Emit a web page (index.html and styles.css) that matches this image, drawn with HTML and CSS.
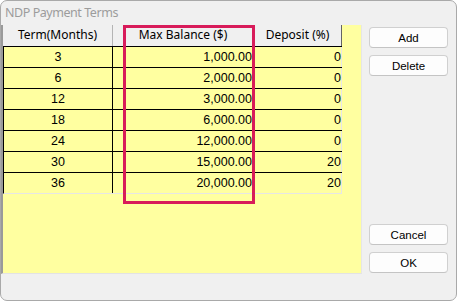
FILE: index.html
```html
<!DOCTYPE html>
<html>
<head>
<meta charset="utf-8">
<link rel="stylesheet" href="styles.css">
</head>
<body>
<div class="window">
  <div class="title">NDP Payment Terms</div>
  <div class="content">
    <div class="grid">
      <div class="header">
        <div class="hcell">Term(Months)</div>
        <div class="hcell">Max Balance ($)</div>
        <div class="hcell last">Deposit (%)</div>
      </div>
      <div class="row"><div class="cell c1">3</div><div class="cell c2">1,000.00</div><div class="cell c3">0</div></div>
      <div class="row"><div class="cell c1">6</div><div class="cell c2">2,000.00</div><div class="cell c3">0</div></div>
      <div class="row"><div class="cell c1">12</div><div class="cell c2">3,000.00</div><div class="cell c3">0</div></div>
      <div class="row"><div class="cell c1">18</div><div class="cell c2">6,000.00</div><div class="cell c3">0</div></div>
      <div class="row"><div class="cell c1">24</div><div class="cell c2">12,000.00</div><div class="cell c3">0</div></div>
      <div class="row"><div class="cell c1">30</div><div class="cell c2">15,000.00</div><div class="cell c3">20</div></div>
      <div class="row lastrow"><div class="cell c1">36</div><div class="cell c2">20,000.00</div><div class="cell c3">20</div></div>
    </div>
    <div class="buttons">
      <div class="group">
        <button class="btn">Add</button>
        <button class="btn">Delete</button>
      </div>
      <div class="group">
        <button class="btn">Cancel</button>
        <button class="btn">OK</button>
      </div>
    </div>
  </div>
  <div class="highlight"></div>
</div>
</body>
</html>
```

FILE: styles.css
```css
* { box-sizing: border-box; }
html, body { margin: 0; padding: 0; background: #ffffff; }
.window {
  position: relative;
  width: 457px;
  height: 301px;
  border: 1px solid #a9a9a9;
  border-radius: 7px;
  background: #f0f0f0;
  overflow: hidden;
}
.title {
  height: 24px;
  line-height: 24px;
  padding-left: 4px;
  font-family: "Noto Sans", sans-serif;
  font-size: 12.5px;
  letter-spacing: -0.45px;
  color: #9c9c9c;
}
.content {
  display: flex;
  height: 248px;
}
.grid {
  width: 361px;
  height: 249px;
  background: #ffffa0;
  border-left: 2px solid #9a9a9a;
  border-right: 1px solid #e6e6e6;
  border-bottom: 1px solid #e3e3e3;
  font-family: "Liberation Sans", Arial, sans-serif;
  font-size: 12.5px;
  color: #000;
}
.header {
  display: grid;
  grid-template-columns: 110px 141px 88px;
  height: 22px;
  width: 339px;
  background: #f0f0f0;
  border-bottom: 1px solid #000;
  font-family: "Noto Sans", sans-serif;
  font-size: 12px;
}
.hcell {
  border-right: 1px solid #b4b4b4;
  text-align: center;
  line-height: 20px;
  color: #000;
}
.hcell.last { border-right: 1px solid #646464; }
.row {
  display: grid;
  grid-template-columns: 109px 141px 88px;
  height: 21px;
  width: 339px;
  border-left: 1px solid #000;
  border-bottom: 1px solid #000;
}
.row.lastrow { border-bottom-color: #e6e6e6; }
.cell {
  border-right: 1px solid #000;
  line-height: 20px;
  white-space: nowrap;
}
.c1 { text-align: center; }
.c2 { text-align: right; padding-right: 1px; }
.c3 { text-align: right; padding-right: 0px; border-right-color: #e6e6e6; }
.buttons {
  margin-left: 7px;
  width: 79px;
  padding-top: 2px;
  display: flex;
  flex-direction: column;
  justify-content: space-between;
}
.group {
  display: flex;
  flex-direction: column;
  gap: 7px;
}
.btn {
  height: 21px;
  width: 79px;
  margin: 0;
  padding: 0;
  background: #fdfdfd;
  border: 1px solid #d0d0d0;
  border-bottom-color: #c4c4c4;
  border-radius: 4px;
  font-family: "Liberation Sans", Arial, sans-serif;
  font-size: 11.5px;
  color: #000;
}
.highlight {
  position: absolute;
  left: 122px;
  top: 24px;
  width: 132px;
  height: 179px;
  border: 3px solid #d81b5a;
}
```
